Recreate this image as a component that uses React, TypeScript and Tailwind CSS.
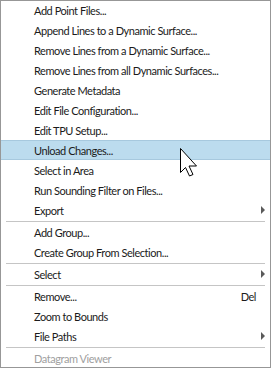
import React from "react";

type Item =
  | { type: "item"; label: string; shortcut?: string; submenu?: boolean; disabled?: boolean; active?: boolean }
  | { type: "sep" };

const items: Item[] = [
  { type: "item", label: "Add Point Files..." },
  { type: "item", label: "Append Lines to a Dynamic Surface..." },
  { type: "item", label: "Remove Lines from a Dynamic Surface..." },
  { type: "item", label: "Remove Lines from all Dynamic Surfaces..." },
  { type: "item", label: "Generate Metadata" },
  { type: "item", label: "Edit File Configuration..." },
  { type: "item", label: "Edit TPU Setup..." },
  { type: "item", label: "Unload Changes...", active: true },
  { type: "item", label: "Select in Area" },
  { type: "item", label: "Run Sounding Filter on Files..." },
  { type: "item", label: "Export", submenu: true },
  { type: "sep" },
  { type: "item", label: "Add Group..." },
  { type: "item", label: "Create Group From Selection..." },
  { type: "sep" },
  { type: "item", label: "Select", submenu: true },
  { type: "sep" },
  { type: "item", label: "Remove...", shortcut: "Del" },
  { type: "item", label: "Zoom to Bounds" },
  { type: "item", label: "File Paths", submenu: true },
  { type: "sep" },
  { type: "item", label: "Datagram Viewer", disabled: true },
];

function Arrow() {
  return (
    <svg width="5" height="8" viewBox="0 0 5 8" className="absolute right-[4px] top-[6px]">
      <path d="M0 0 L4 4 L0 8 Z" fill="#5a5a5a" />
    </svg>
  );
}

export default function App() {
  return (
    <div
      className="relative w-[271px] h-[368px] overflow-hidden bg-white border border-[#979797]"
      style={{ fontFamily: 'Lato, "Segoe UI", sans-serif' }}
    >
      <div className="-mt-px flex flex-col">
        {items.map((it, i) =>
          it.type === "sep" ? (
            <div key={i} className="h-[2px] flex items-end px-[5px]">
              <div className="h-px w-full bg-[#c5c5c5]" />
            </div>
          ) : (
            <div
              key={i}
              className={
                "relative h-[20px] flex items-center pl-[33px] text-[11px] tracking-[-0.45px] leading-[20px] whitespace-nowrap " +
                (it.active ? "bg-[#bcdcee] shadow-[inset_0_1px_0_#a7c9de,inset_0_-1px_0_#a7c9de] " : "") +
                (it.disabled ? "text-[#a0a0a0]" : "text-[#1b1b1b]")
              }
            >
              <span className="pt-[1px]">{it.label}</span>
              {it.shortcut && (
                <span className="absolute right-[14px] pt-[1px]">{it.shortcut}</span>
              )}
              {it.submenu && <Arrow />}
            </div>
          )
        )}
      </div>
      <svg
        width="24"
        height="32"
        viewBox="0 0 24 32"
        className="absolute left-[178px] top-[146px]"
      >
        <path
          d="M1.5 1.5 L1.5 25.5 L6.5 20.5 L10.5 29 L14 27.5 L10 19 L17.5 19 Z"
          fill="white"
          stroke="black"
          strokeWidth="1"
          strokeLinejoin="miter"
        />
      </svg>
    </div>
  );
}
